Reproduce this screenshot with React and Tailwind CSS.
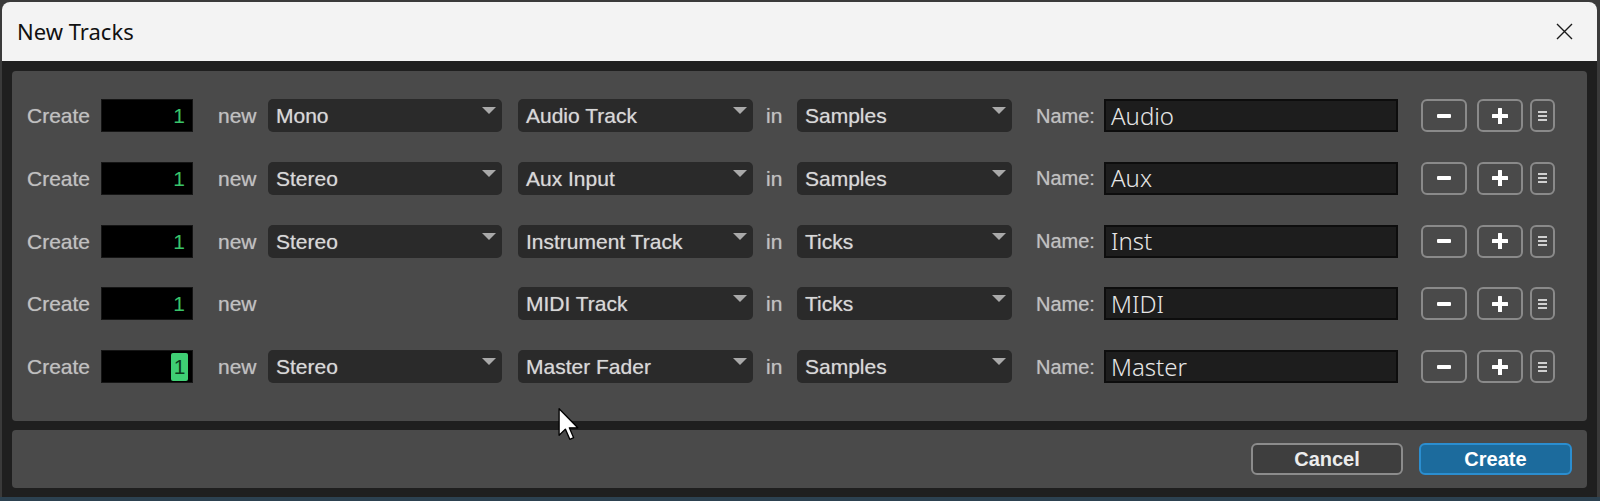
const rows = [
  { fmt: 'Mono', type: 'Audio Track', tb: 'Samples', name: 'Audio' },
  { fmt: 'Stereo', type: 'Aux Input', tb: 'Samples', name: 'Aux' },
  { fmt: 'Stereo', type: 'Instrument Track', tb: 'Ticks', name: 'Inst' },
  { fmt: null, type: 'MIDI Track', tb: 'Ticks', name: 'MIDI' },
  { fmt: 'Stereo', type: 'Master Fader', tb: 'Samples', name: 'Master', sel: true },
];

const labelFont = { fontFamily: '"Liberation Sans", Arial, sans-serif' };

function Dropdown({ label, w }) {
  return (
    <div className={`flex h-[33px] items-start justify-between rounded-[5px] bg-[#2a2a2a] ${w}`}>
      <span className="flex h-full items-center pl-[8px] text-[21px] leading-none text-[#d8d8d8] [text-shadow:0_0_1px_rgba(220,220,220,0.6)]">{label}</span>
      <svg width="14" height="8" viewBox="0 0 14 8" className="mr-[6px] mt-[8px]">
        <path d="M0 0 H14 L7 7 Z" fill="#a9a9a9" />
      </svg>
    </div>
  );
}

function Row({ r }) {
  return (
    <div className="flex h-[33px] items-center" style={labelFont}>
      <span className="w-[74px] text-[21px] leading-none text-[#c0c0c0] [text-shadow:0_0_1px_rgba(200,200,200,0.6)]">Create</span>
      <div className="flex h-[33px] w-[92px] items-center justify-end border border-[#151515] bg-black pr-[4px]">
        {r.sel ? (
          <span className="flex h-[28px] w-[17px] items-center justify-center rounded-[2px] bg-[#3fcf74] text-[21px] leading-none text-[#0c3b1d]">1</span>
        ) : (
          <span className="pr-[3px] text-[21px] leading-none text-[#39c46a]">1</span>
        )}
      </div>
      <span className="ml-[25px] w-[50px] text-[21px] leading-none text-[#c0c0c0] [text-shadow:0_0_1px_rgba(200,200,200,0.6)]">new</span>
      {r.fmt ? <Dropdown label={r.fmt} w="w-[234px]" /> : <div className="w-[234px]" />}
      <div className="ml-[16px]">
        <Dropdown label={r.type} w="w-[235px]" />
      </div>
      <span className="ml-[13px] w-[31px] text-[21px] leading-none text-[#c0c0c0] [text-shadow:0_0_1px_rgba(200,200,200,0.6)]">in</span>
      <Dropdown label={r.tb} w="w-[215px]" />
      <span className="ml-[24px] w-[68px] text-[20px] leading-none text-[#c0c0c0] [text-shadow:0_0_1px_rgba(200,200,200,0.6)]">Name:</span>
      <div className="flex h-[33px] w-[294px] items-center border-2 border-[#0d0d0d] bg-[#1d1d1d] pl-[5px]">
        <span className="text-[24px] font-light leading-none text-[#e6e6e6]" style={{ fontFamily: '"Noto Sans", sans-serif' }}>{r.name}</span>
      </div>
      <div className="ml-[23px] flex h-[33px] w-[46px] items-center justify-center rounded-[6px] border-2 border-[#8a8a8a]">
        <div className="h-[4px] w-[14px] rounded-[1px] bg-white" />
      </div>
      <div className="ml-[10px] flex h-[33px] w-[46px] items-center justify-center rounded-[6px] border-2 border-[#8a8a8a]">
        <svg width="16" height="16" viewBox="0 0 16 16">
          <rect x="0" y="6" width="16" height="4" rx="0.5" fill="#fff" />
          <rect x="6" y="0" width="4" height="16" rx="0.5" fill="#fff" />
        </svg>
      </div>
      <div className="ml-[7px] flex h-[33px] w-[25px] flex-col items-center justify-center gap-[2px] rounded-[6px] border-2 border-[#8a8a8a]">
        <div className="h-[2px] w-[9px] bg-[#d0d0d0]" />
        <div className="h-[2px] w-[9px] bg-[#d0d0d0]" />
        <div className="h-[2px] w-[9px] bg-[#d0d0d0]" />
      </div>
    </div>
  );
}

export default function App() {
  return (
    <div className="relative h-[501px] w-[1600px] overflow-hidden bg-[#3a3a3a] pl-[2px] pr-[3px] pt-[2px]">
      <div className="flex h-[495px] flex-col overflow-hidden rounded-t-[8px] bg-[#1f1f1f]">
        <div className="flex h-[59px] shrink-0 items-center justify-between bg-[#f3f3f3] pl-[15px] pr-[24px]">
          <span className="text-[22px] text-[#111]" style={{ fontFamily: '"Noto Sans", "Segoe UI", sans-serif' }}>New Tracks</span>
          <svg width="17" height="17" viewBox="0 0 17 17">
            <path d="M1 1 L16 16 M16 1 L1 16" stroke="#1a1a1a" strokeWidth="1.4" />
          </svg>
        </div>
        <div className="flex flex-1 flex-col gap-[9px] px-[10px] pb-[8px] pt-[10px]">
          <div className="flex h-[350px] flex-col gap-[29.75px] rounded-[4px] bg-[#4a4a4a] pl-[15px] pt-[28px]">
            {rows.map((r, i) => (
              <Row key={i} r={r} />
            ))}
          </div>
          <div className="flex h-[58px] items-center justify-end gap-[16px] rounded-[4px] bg-[#4a4a4a] pr-[15px]" style={labelFont}>
            <button className="flex h-[32px] w-[152px] items-center justify-center rounded-[6px] border-2 border-[#8c8c8c] bg-[#3e3e3e] text-[20px] font-bold text-[#ececec]">Cancel</button>
            <button className="flex h-[32px] w-[153px] items-center justify-center rounded-[6px] border-2 border-[#2b8ed0] bg-[#1c6b9d] text-[20px] font-bold text-white">Create</button>
          </div>
        </div>
      </div>
      <div className="absolute bottom-0 left-0 h-[4px] w-full bg-[#2c4150]" />
      <svg className="absolute left-[558px] top-[408px]" width="22" height="33" viewBox="0 0 13 20">
        <path d="M0.5 0.5 L0.5 16.5 L4.3 12.8 L7 19 L9.3 18 L6.7 12 L11.8 12 Z" fill="#fff" stroke="#000" strokeWidth="0.8" strokeLinejoin="round" />
      </svg>
    </div>
  );
}
